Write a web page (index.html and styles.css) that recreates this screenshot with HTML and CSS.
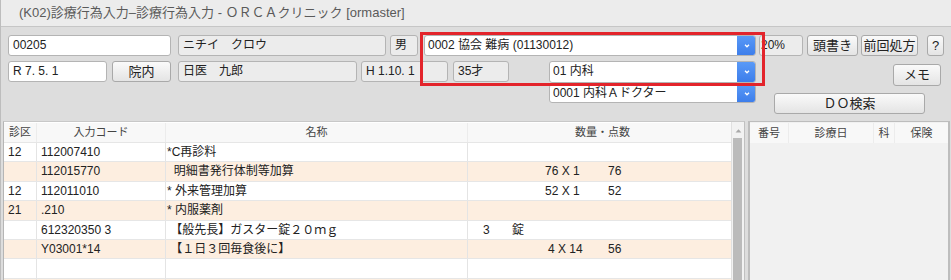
FILE: index.html
```html
<!DOCTYPE html>
<html lang="ja">
<head>
<meta charset="utf-8">
<link rel="stylesheet" href="styles.css">
</head>
<body>
<div class="window">
  <div class="titlebar">(K02)診療行為入力–診療行為入力 - ＯＲＣＡクリニック [ormaster]</div>
  <div class="form">
    <div class="row row1">
      <div class="fld w-id">00205</div>
      <div class="fld ro w-name">ニチイ　クロウ</div>
      <div class="fld ro w-sex">男</div>
      <div class="combo w-ins"><span class="ctext">0002 協会 難病 (01130012)</span><span class="cbtn"><svg viewBox="0 0 10 10" width="8" height="8"><path d="M2.5 3.5 L5 6 L7.5 3.5" fill="none" stroke="#fff" stroke-width="1.6"/></svg></span></div>
      <div class="fld ro w-rate">20%</div>
      <div class="btn w-head">頭書き</div>
      <div class="btn w-prev">前回処方</div>
      <div class="btn w-help">?</div>
    </div>
    <div class="row row2">
      <div class="fld w-date">R 7. 5. 1</div>
      <div class="btn w-innai">院内</div>
      <div class="fld ro w-doc">日医　九郎</div>
      <div class="fld ro w-birth">H 1.10. 1</div>
      <div class="fld ro w-age">35才</div>
      <div class="combo w-dept"><span class="ctext">01 内科</span><span class="cbtn"><svg viewBox="0 0 10 10" width="8" height="8"><path d="M2.5 3.5 L5 6 L7.5 3.5" fill="none" stroke="#fff" stroke-width="1.6"/></svg></span></div>
      <div class="btn w-memo">メモ</div>
    </div>
    <div class="row row3">
      <div class="combo w-dr"><span class="ctext">0001 内科Ａドクター</span><span class="cbtn"><svg viewBox="0 0 10 10" width="8" height="8"><path d="M2.5 3.5 L5 6 L7.5 3.5" fill="none" stroke="#fff" stroke-width="1.6"/></svg></span></div>
      <div class="btn w-do">ＤＯ検索</div>
    </div>
    <div class="highlight"></div>
  </div>
  <div class="panels">
    <div class="lpanel">
      <div class="tbl">
        <div class="tr th">
          <div class="c">診区</div><div class="c">入力コード</div><div class="c">名称</div><div class="c qh">数量・点数</div>
        </div>
        <div class="tr">
          <div class="c">12</div><div class="c">112007410</div><div class="c nm">*C再診料</div><div class="c"></div>
        </div>
        <div class="tr alt">
          <div class="c"></div><div class="c">112015770</div><div class="c nm">  明細書発行体制等加算</div><div class="c"><span class="qty">76 X 1</span><span class="pt">76</span></div>
        </div>
        <div class="tr">
          <div class="c">12</div><div class="c">112011010</div><div class="c nm">* 外来管理加算</div><div class="c"><span class="qty">52 X 1</span><span class="pt">52</span></div>
        </div>
        <div class="tr alt">
          <div class="c">21</div><div class="c">.210</div><div class="c nm">* 内服薬剤</div><div class="c"></div>
        </div>
        <div class="tr">
          <div class="c"></div><div class="c">612320350 3</div><div class="c nm"> 【般先長】ガスター錠２０ｍｇ</div><div class="c"><span class="amt">3</span><span class="unit">錠</span></div>
        </div>
        <div class="tr alt">
          <div class="c"></div><div class="c">Y03001*14</div><div class="c nm"> 【１日３回毎食後に】</div><div class="c"><span class="qty q2">4 X 14</span><span class="pt">56</span></div>
        </div>
        <div class="tr">
          <div class="c"></div><div class="c"></div><div class="c"></div><div class="c"></div>
        </div>
        <div class="tr alt">
          <div class="c"></div><div class="c"></div><div class="c"></div><div class="c"></div>
        </div>
      </div>
      <div class="vscroll">
        <div class="arrow"><svg viewBox="0 0 8 6" width="7" height="5"><path d="M0.5 5.5 L4 1.5 L7.5 5.5 Z" fill="#a8a8a8"/></svg></div>
        <div class="thumb"></div>
      </div>
    </div>
    <div class="rpanel">
      <div class="rhead">
        <div class="rc r1">番号</div><div class="rc r2">診療日</div><div class="rc r3">科</div><div class="rc r4">保険</div>
      </div>
    </div>
  </div>
</div>
</body>
</html>
```
FILE: styles.css
```css
* { box-sizing: border-box; }
html, body { margin: 0; padding: 0; }
body {
  width: 951px;
  height: 280px;
  overflow: hidden;
  background: #dddddd;
  font-family: "Liberation Sans", "Noto Sans CJK JP", sans-serif;
  font-size: 12px;
  color: #222;
}
.window {
  height: 280px;
  overflow: hidden;
  border-left: 1px solid #bdbdbd;
}
.titlebar {
  height: 27px;
  background: #ececec;
  border-bottom: 1px solid #c6c6c6;
  color: #5a5a5a;
  font-size: 13px;
  line-height: 26px;
  padding-left: 18px;
  white-space: nowrap;
}
.form {
  position: relative;
  padding: 8px 0 0 7px;
  height: 94px;
}
.row { display: flex; align-items: flex-start; }
.row1 { height: 26px; }
.row2 { height: 23px; }
.fld, .btn, .combo {
  height: 21px;
  border: 1px solid #b4b4b4;
  border-radius: 3px;
  background: #fff;
  line-height: 19px;
  padding: 0 4px;
  white-space: nowrap;
  overflow: hidden;
  flex: none;
}
.fld.ro { background: #ececec; }
.btn {
  background: linear-gradient(#fafafa, #e4e4e4);
  border-color: #a9a9a9;
  text-align: center;
  font-size: 13px;
  padding: 0;
}
.combo {
  display: flex;
  padding: 0;
  border-radius: 3px;
}
.ctext { flex: 1; padding-left: 3px; }
.cbtn {
  width: 19px;
  background: linear-gradient(#5b9bf8, #3b7cea);
  display: flex;
  align-items: center;
  justify-content: center;
  margin: -1px -1px -1px 0;
  border-radius: 0 3px 3px 0;
}
.w-id { width: 163px; }
.w-name { width: 208px; margin-left: 7px; }
.w-sex { width: 28px; margin-left: 4px; }
.w-ins { width: 332px; margin-left: 6px; }
.w-rate { width: 44px; margin-left: 3px; padding-left: 1px; }
.w-head { width: 51px; margin-left: 4px; }
.w-prev { width: 57px; margin-left: 3px; }
.w-help { width: 17px; margin-left: 9px; }

.w-date { width: 99px; }
.w-innai { width: 59px; margin-left: 5px; }
.w-doc { width: 179px; margin-left: 7px; }
.w-birth { width: 87px; margin-left: 4px; }
.w-age { width: 56px; margin-left: 5px; }
.w-dept { width: 207px; margin-left: 40px; height: 22px; }
.w-memo { width: 48px; margin-left: 137px; margin-top: 3px; height: 22px; line-height: 20px; }

.row3 { padding-left: 541px; }
.w-dr { width: 207px; height: 19px; line-height: 17px; }
.w-do { width: 151px; margin-left: 18px; margin-top: 9px; height: 21px; }

.highlight {
  position: absolute;
  left: 419px;
  top: 5px;
  width: 345px;
  height: 54px;
  border: 3px solid #e3242b;
  pointer-events: none;
}

.panels {
  display: flex;
  padding-left: 2px;
  height: 159px;
  overflow: hidden;
}
.lpanel {
  display: flex;
  width: 742px;
  overflow: hidden;
  border-left: 1px solid #b5b5b5;
  border-top: 1px solid #c8c8c8;
  border-right: 1px solid #c0c0c0;
  background: #fff;
}
.tbl { width: 727px; }
.tr {
  display: grid;
  grid-template-columns: 33px 129px 302px 1fr;
  height: 19.4px;
  border-bottom: 1px solid #e6e6e6;
}
.tr.alt { background: #fdeee0; }
.tr .c {
  border-right: 1px solid #e4e4e4;
  line-height: 18px;
  padding-left: 4px;
  white-space: pre;
  overflow: hidden;
}
.tr .c:last-child { border-right: none; }
.tr .c.nm { padding-left: 1px; }
.th { background: #f8f8f8; height: 20px; margin-top: 1px; }
.th .c {
  text-align: center;
  font-size: 11px;
  color: #444;
  padding-left: 0;
  line-height: 19px;
  border-right-color: #ececec;
}
.th .qh { padding-left: 6px; }
.qty { display: inline-block; margin-left: 73px; width: 63px; }
.q2 { margin-left: 76px; width: 60px; }
.pt { display: inline-block; }
.amt { display: inline-block; margin-left: 11px; width: 29px; }
.unit { display: inline-block; }

.vscroll {
  width: 13px;
  border-left: 1px solid #e0e0e0;
  background: #f2f2f2;
  display: flex;
  flex-direction: column;
}
.arrow {
  height: 16px;
  display: flex;
  justify-content: center;
  align-items: center;
}
.thumb {
  flex: 1;
  margin: 0 2px 0 1px;
  background: #bbbbbb;
}
.rpanel {
  width: 202px;
  margin-left: 3px;
  border: 1px solid #bdbdbd;
  border-width: 1px 2px 0 2px;
  background: #f1f1f1;
}
.rhead {
  display: flex;
  height: 20px;
  margin-top: 1px;
  background: #f8f8f8;
  font-size: 11px;
  color: #444;
  line-height: 20px;
}
.rc { text-align: center; border-right: 1px solid #ececec; }
.r1 { width: 39px; }
.r2 { width: 85px; }
.r3 { width: 21px; }
.r4 { flex: 1; border-right: none; }
```
